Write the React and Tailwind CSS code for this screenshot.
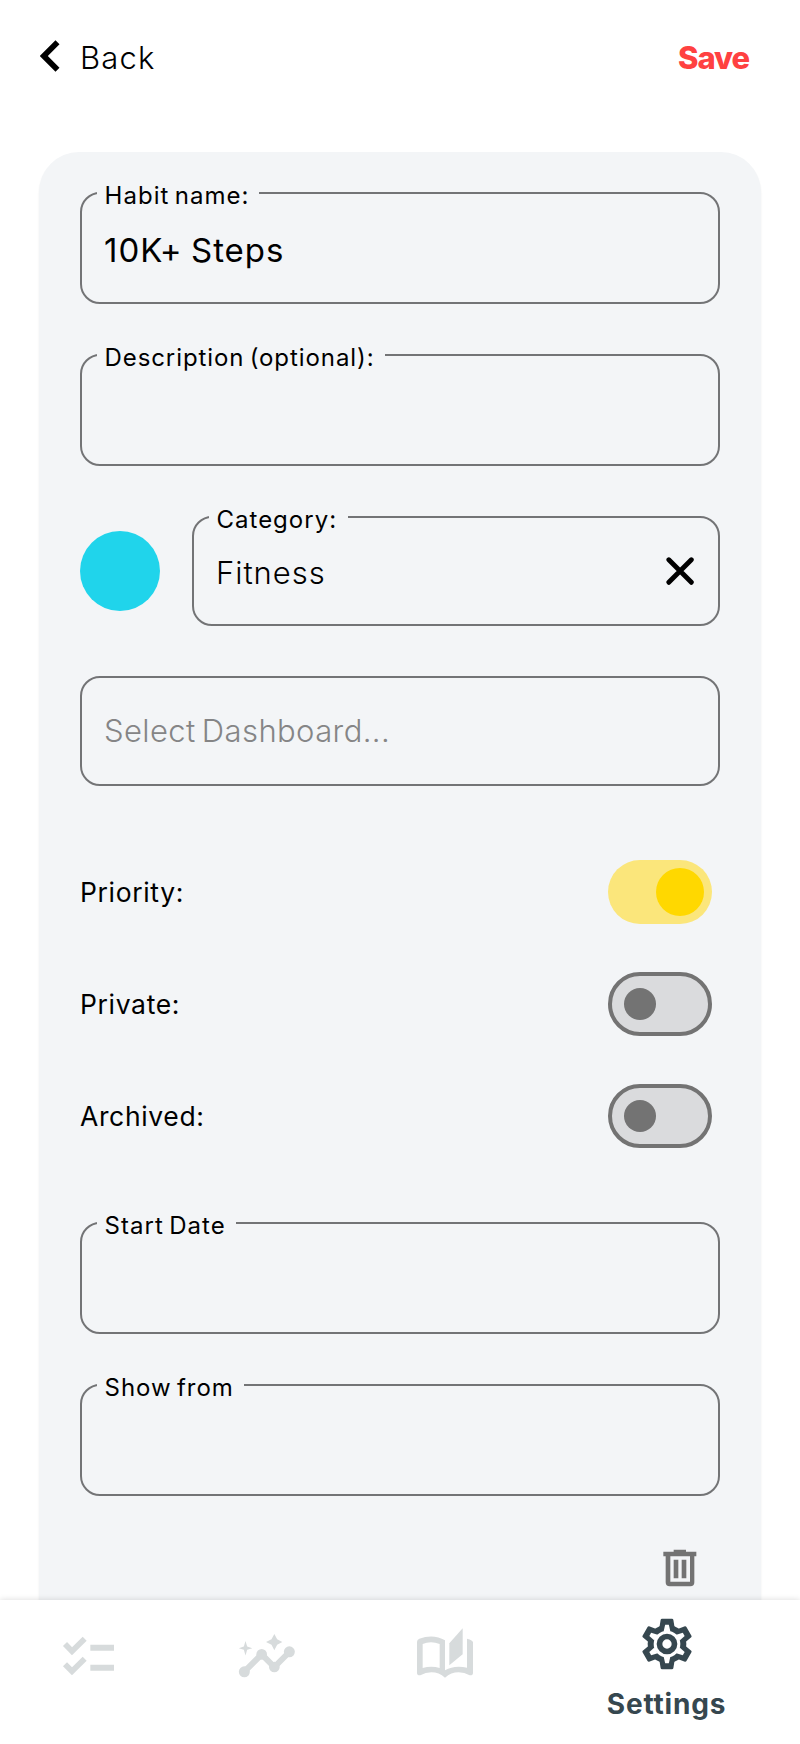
import React from "react";

function Field({ label, labelClass = "", className = "", children }) {
  return (
    <div
      className={`relative flex items-center rounded-[20px] border-2 border-[#737476] pl-[22px] pr-6 ${className}`}
    >
      {label && (
        <span
          className={`absolute -top-[12px] left-[15px] h-[28px] whitespace-nowrap bg-[#f3f5f7] pl-[7.5px] text-[24px] leading-[28px] text-black [word-spacing:-2.5px] ${labelClass}`}
        >
          {label}
        </span>
      )}
      {children}
    </div>
  );
}

function ToggleRow({ label, on }) {
  return (
    <div className="flex h-16 items-center justify-between pr-2">
      <span className="text-[26.5px] leading-8 tracking-[0.65px] text-black">{label}</span>
      {on ? (
        <span className="flex h-16 w-[104px] items-center justify-end rounded-full bg-[#fbe67b] pr-2">
          <span className="size-12 rounded-full bg-[#ffd800]" />
        </span>
      ) : (
        <span className="flex h-16 w-[104px] items-center rounded-full border-4 border-[#737373] bg-[#dadbdd] pl-3">
          <span className="size-8 rounded-full bg-[#737373]" />
        </span>
      )}
    </div>
  );
}

function ChevronIcon() {
  return (
    <svg width="20" height="32" viewBox="119 119 60 96" fill="none" stroke="#000" strokeWidth="17">
      <path d="M171.500 126 130.500 167l41 41" />
    </svg>
  );
}

function CloseIcon() {
  return (
    <svg width="28" height="28" viewBox="798 230 84 84" stroke="#000" strokeWidth="14.500" strokeLinecap="round">
      <path d="M806.500 238.500l67.500 67.500M874 238.500 806.500 306" />
    </svg>
  );
}

function TrashIcon() {
  return (
    <svg width="34" height="38" viewBox="789 86 102 114" fill="#737373">
      <path d="M790 94h31v-6h37v6h31v14h-6v78q0 12-12 12h-62q-12 0-12-12v-78h-7zM811 108v76h59v-76z" fillRule="evenodd" />
      <path d="M821 118h14v56h-14zM845 118h14v56h-14z" />
    </svg>
  );
}

function ChecklistIcon() {
  return (
    <svg width="54" height="42" viewBox="188 166 162 126">
      <g fill="none" stroke="#d7dbdc" strokeWidth="17">
        <path d="M197 193l21 21.500L256 177M197 253.500l21 21.500 38-37.500" />
      </g>
      <path d="M273 195h71v18h-71zM273 255h71v18h-71z" fill="#d7dbdc" />
    </svg>
  );
}

function InsightsIcon() {
  return (
    <svg width="58" height="46" viewBox="714 161 174 138" fill="#d7dbdc">
      <path d="M733 277l52-52 38 38 45-45" fill="none" stroke="#d7dbdc" strokeWidth="18" />
      <circle cx="733" cy="277.500" r="16.500" />
      <circle cx="785" cy="225" r="16" />
      <circle cx="823" cy="263" r="16" />
      <circle cx="868" cy="217.500" r="16.500" />
      <path d="M823 164l8.500 15.500L847 188l-15.500 8.500L823 213l-8.500-16.500L798 188l16.500-8.500zM736.500 185l5 16.500 15.500 5-15.500 5-5 17-5-17-15-5 15-5z" />
    </svg>
  );
}

function BookIcon() {
  return (
    <svg width="58" height="52" viewBox="47 322 174 156" fill="#d7dbdc">
      <path
        fillRule="evenodd"
        d="M50 367Q50 360 57 357 75 350.500 92 350.500 115 350.500 134 362V452Q152 441 175 441 188 441 200 444V357Q218 362 218 368V459Q218 468 208 467 192 458 175 458 152 458 134 474 116 458 93 458 76 458 60 467 50 468 50 459ZM67 373V445Q80 441 93 441 106 441 118 445V373Q105 368 92 368 79 368 67 373Z"
      />
      <path d="M147 371 187 326V404L147 437Z" />
    </svg>
  );
}

function GearIcon() {
  const angles = [0, 60, 120, 180, 240, 300];
  return (
    <svg width="52" height="52" viewBox="-78 -78 156 156">
      <g fill="#36474f">
        <circle r="58" />
        {angles.map((a) => (
          <path
            key={a}
            d="M-15 -76H15Q18 -76 19 -73L23 -48 36 -40H-36L-23 -48 -19 -73Q-18 -76 -15 -76Z"
            transform={`rotate(${a})`}
          />
        ))}
      </g>
      <g fill="#fff">
        <circle r="40" />
        {angles.map((a) => (
          <path key={a} d="M-5.500 -58H5.500L10 -38H-10Z" transform={`rotate(${a})`} />
        ))}
      </g>
      <circle r="22.500" fill="none" stroke="#36474f" strokeWidth="17" />
    </svg>
  );
}

export default function App() {
  return (
    <div className="flex h-[1744px] w-[800px] flex-col overflow-hidden bg-white font-['Inter',sans-serif]">
      <header className="flex h-[152px] shrink-0 items-start justify-between pl-10 pr-[51px] pt-10">
        <div className="flex h-9 items-start">
          <ChevronIcon />
          <span className="ml-5 text-[31px] font-light leading-9 tracking-[1.2px] text-black">Back</span>
        </div>
        <span className="text-[31px] font-extrabold leading-9 tracking-[-1.1px] text-[#ff4141]">Save</span>
      </header>

      <main className="mx-[39px] flex h-[1448px] shrink-0 flex-col rounded-t-[40px] bg-[#f3f5f7] px-[41px] pt-10 shadow-[0_2px_2px_rgba(0,0,0,0.08)]">
        <Field label="Habit name:" className="h-28" labelClass="w-[162px] tracking-[1.05px]">
          <span className="pt-[3px] text-[33px] leading-10 tracking-[1px] text-black [word-spacing:-2px]">
            10K+ Steps
          </span>
        </Field>
        <Field
          label="Description (optional):"
          className="mt-[50px] h-28"
          labelClass="w-[288px] tracking-[0.92px]"
        />

        <div className="mt-[50px] flex items-center gap-8">
          <span className="size-20 shrink-0 rounded-full bg-[#20d4eb]" />
          <Field
            label="Category:"
            className="h-[110px] flex-1 justify-between"
            labelClass="w-[139px] tracking-[1px]"
          >
            <span className="pt-[3px] text-[31px] font-light leading-10 tracking-[0.95px] text-black">Fitness</span>
            <CloseIcon />
          </Field>
        </div>

        <Field className="mt-[50px] h-[110px]">
          <span className="text-[31px] font-light leading-10 tracking-[0.4px] text-[#858586] [word-spacing:-3px]">
            Select Dashboard...
          </span>
        </Field>

        <div className="mt-[74px] flex flex-col gap-12">
          <ToggleRow label="Priority:" on />
          <ToggleRow label="Private:" />
          <ToggleRow label="Archived:" />
        </div>

        <Field label="Start Date" className="mt-[74px] h-28" labelClass="w-[139px] tracking-[1.05px]" />
        <Field label="Show from" className="mt-[50px] h-28" labelClass="w-[147px] tracking-[1px]" />

        <div className="mt-[53px] flex justify-end pr-[23px]">
          <TrashIcon />
        </div>
      </main>

      <nav className="relative grid h-36 shrink-0 grid-cols-4 bg-white shadow-[0_0_6px_rgba(0,0,0,0.15)]">
        <div className="flex justify-center pr-[22px] pt-[35px]">
          <ChecklistIcon />
        </div>
        <div className="flex justify-center pr-[66px] pt-[33px]">
          <InsightsIcon />
        </div>
        <div className="flex justify-center pr-[111px] pt-[27px]">
          <BookIcon />
        </div>
        <div className="flex flex-col items-center pr-[67px] pt-[18px]">
          <GearIcon />
          <span className="mt-[16px] text-[28px] font-bold leading-9 tracking-[0.8px] text-[#36474f]">Settings</span>
        </div>
      </nav>
    </div>
  );
}
